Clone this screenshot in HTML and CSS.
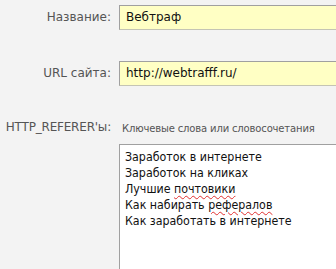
FILE: index.html
```html
<!DOCTYPE html>
<html lang="ru">
<head>
<meta charset="utf-8">
<link rel="stylesheet" href="styles.css">
</head>
<body>
<div class="form">
  <div class="row row-name">
    <div class="label">Название:</div>
    <div class="field"><div class="input">Вебтраф</div></div>
  </div>
  <div class="row row-url">
    <div class="label">URL сайта:</div>
    <div class="field"><div class="input">http://webtrafff.ru/</div></div>
  </div>
  <div class="row row-ref">
    <div class="label label-ref">HTTP_REFERER'ы:</div>
    <div class="field">
      <div class="hint">Ключевые слова или словосочетания</div>
      <div class="textarea">
        <div>Заработок в интернете</div>
        <div>Заработок на кликах</div>
        <div>Лучшие <span class="spell">почтовики</span></div>
        <div>Как набирать <span class="spell">рефералов</span></div>
        <div>Как заработать в интернете</div>
      </div>
    </div>
  </div>
</div>
</body>
</html>
```
FILE: styles.css
```css
html, body {
  margin: 0;
  padding: 0;
  background: #f3f3f3;
}
body {
  font-family: "DejaVu Sans", Verdana, sans-serif;
}
.form {
  width: 336px;
  height: 269px;
  overflow: hidden;
  display: flex;
  flex-direction: column;
  padding-top: 5px;
  box-sizing: border-box;
}
.row {
  display: flex;
  align-items: flex-start;
}
.label {
  width: 111px;
  flex: none;
  text-align: right;
  color: #555;
  font-size: 12px;
  line-height: 24px;
  white-space: nowrap;
}
.label-ref {
  letter-spacing: -0.2px;
  line-height: 20px;
}
.field {
  margin-left: 8px;
  flex: 1;
  min-width: 0;
  overflow: hidden;
}
.input {
  box-sizing: border-box;
  height: 25px;
  width: 240px;
  background: #ffffc4;
  border: 1px solid #c4c4b4;
  border-top-color: #a0a0a0;
  border-left-color: #a0a0a0;
  border-right: none;
  padding-left: 6px;
  font-size: 12px;
  line-height: 23px;
  color: #111;
  white-space: nowrap;
}
.row-url {
  margin-top: 31px;
}
.row-ref {
  margin-top: 31px;
}
.hint {
  font-size: 10px;
  letter-spacing: -0.15px;
  color: #555;
  line-height: 16px;
  margin-top: 4px;
  padding-left: 3px;
  white-space: nowrap;
}
.textarea {
  box-sizing: border-box;
  margin-top: 7px;
  width: 240px;
  height: 140px;
  background: #fff;
  border: 1px solid #a0a0a0;
  border-right: none;
  border-bottom: none;
  padding: 4px 0 0 5px;
  font-family: "DejaVu Sans Condensed", "DejaVu Sans", sans-serif;
  font-stretch: condensed;
  font-size: 12.3px;
  line-height: 16px;
  color: #111;
}
.spell {
  text-decoration: underline wavy #e03030;
  text-decoration-thickness: 1px;
  text-underline-offset: 2px;
}
```
